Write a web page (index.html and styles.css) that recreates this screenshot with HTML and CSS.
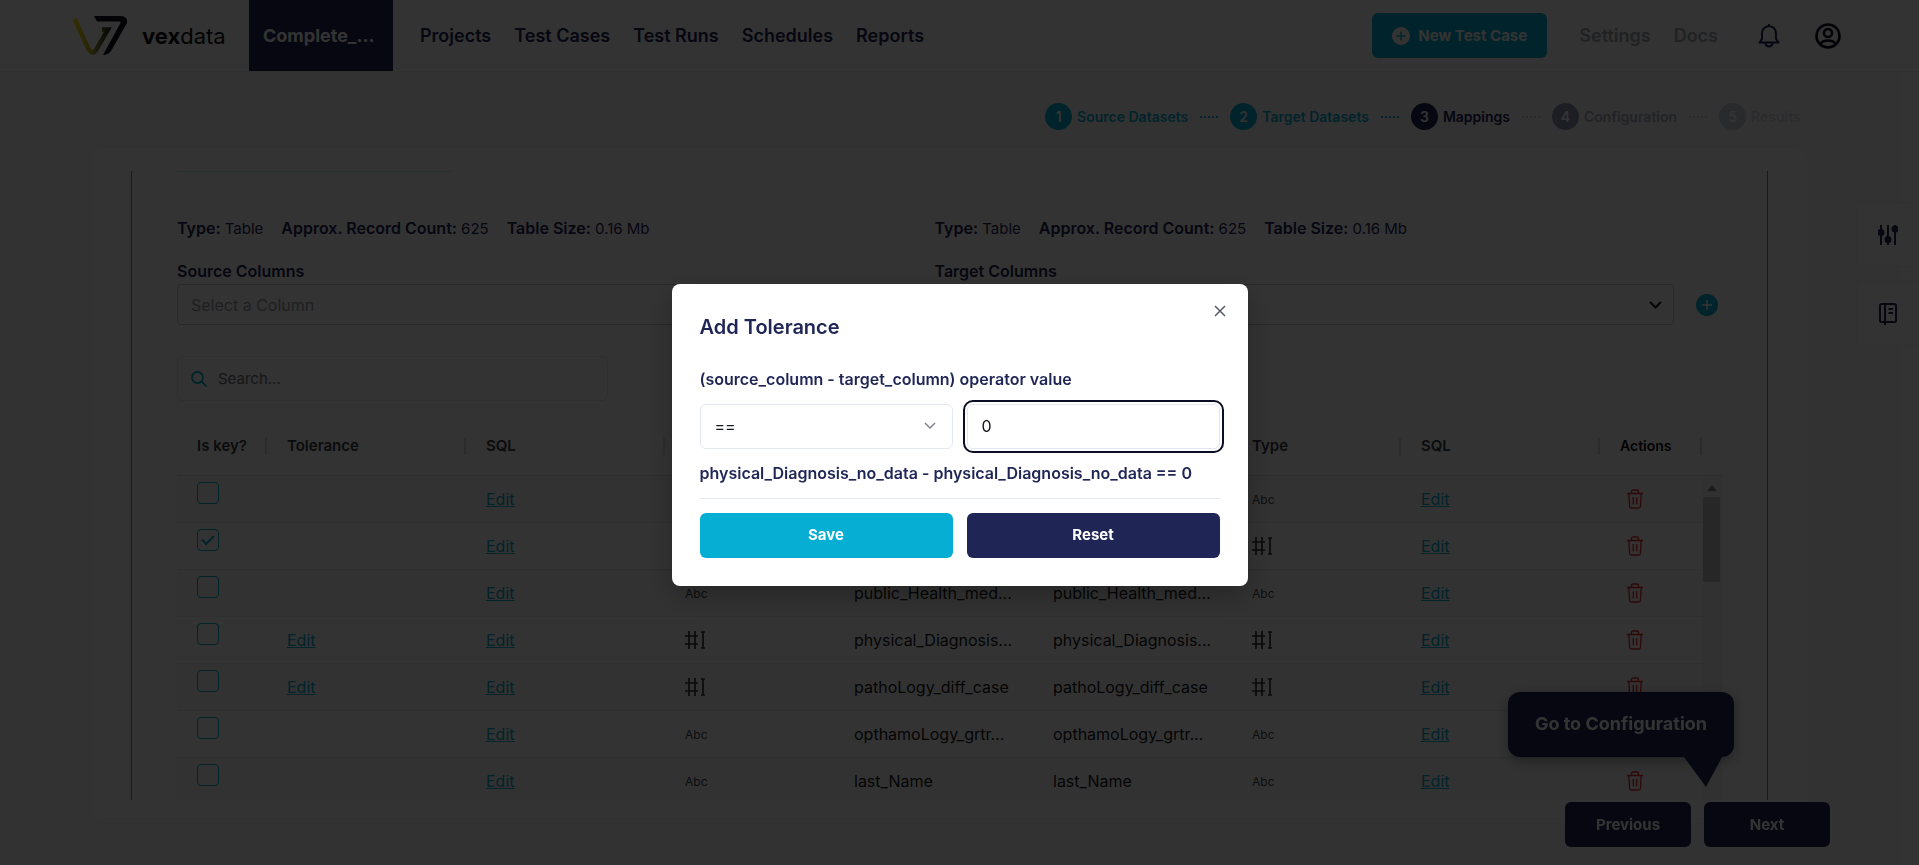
FILE: index.html
```html
<!DOCTYPE html>
<html lang="en">
<head>
<meta charset="utf-8">
<title>vexdata</title>
<link rel="stylesheet" href="styles.css">
</head>
<body>
<svg class="defs" aria-hidden="true">
  <symbol id="trash" viewBox="0 0 16 20"><path d="M0 4.500H16M4.500 4.500V2.500Q4.500 1 6 1H10Q11.500 1 11.500 2.500V4.500M1.800 4.500 2.600 17.500Q2.700 19 4.200 19H11.800Q13.300 19 13.400 17.500L14.200 4.500M6.300 8V15.500M9.700 8V15.500" fill="none" stroke="currentColor" stroke-width="1.300"/></symbol>
  <symbol id="num" viewBox="0 0 20 18"><path d="M4 0V18M10 0V18M0 5H13M0 13H13M16 1H20M16 17H20M18 1V17" fill="none" stroke="currentColor" stroke-width="1.700"/></symbol>
</svg>

<header class="header">
  <a class="brand" href="#">
    <svg class="logo" viewBox="0 0 56 40" aria-hidden="true">
      <defs>
        <linearGradient id="lg" x1="0" y1="0" x2="1" y2="0"><stop offset="0" stop-color="#ffe600"/><stop offset=".45" stop-color="#c9b92c"/><stop offset="1" stop-color="#33332c"/></linearGradient>
      </defs>
      <path d="M2.500 3 17 34Q20.500 39 24 34L36 13.500H30" fill="none" stroke="url(#lg)" stroke-width="4.500"/>
      <path d="M22 0H49Q57 1 54.500 8L39 35Q36 39 31 39L48.500 7Q49 5.500 47 5.500H25Z" fill="#10131c"/>
    </svg>
    <span class="brand-name"><b>vex</b>data</span>
  </a>
  <button class="project">Complete_...</button>
  <nav class="nav">
    <a href="#">Projects</a><a href="#">Test Cases</a><a href="#">Test Runs</a><a href="#">Schedules</a><a href="#">Reports</a>
  </nav>
  <button class="new-case">
    <svg width="18" height="18" viewBox="0 0 18 18" aria-hidden="true"><circle cx="9" cy="9" r="9" fill="#fff"/><path d="M9 4.500V13.500M4.500 9H13.500" stroke="#06aed4" stroke-width="1.500"/></svg>
    New Test Case
  </button>
  <nav class="nav nav-muted"><a href="#">Settings</a><a href="#">Docs</a></nav>
  <button class="icon-btn" aria-label="Notifications">
    <svg width="22" height="24" viewBox="0 0 22 24" fill="none" stroke="#1f2555" stroke-width="2"><path d="M1.500 18.500H20.500L18 15V9.500Q18 3 11 2Q4 3 4 9.500V15ZM7.500 19Q8 22.500 11 22.500T14.500 19" stroke-linejoin="round"/><path d="M11 0V2"/></svg>
  </button>
  <button class="icon-btn user" aria-label="Account">
    <svg width="26" height="26" viewBox="0 0 26 26" fill="none" stroke="#0b0d1f" stroke-width="2.600"><circle cx="13" cy="13" r="11.500"/><circle cx="13" cy="10" r="4"/><path d="M5.500 21Q7.500 17.500 13 17.500T20.500 21"/></svg>
  </button>
</header>

<main class="page">
  <ol class="steps">
    <li class="step done"><span class="dot">1</span>Source Datasets</li>
    <li class="step done"><span class="dot">2</span>Target Datasets</li>
    <li class="step current"><span class="dot">3</span>Mappings</li>
    <li class="step next"><span class="dot">4</span>Configuration</li>
    <li class="step later"><span class="dot">5</span>Results</li>
  </ol>

  <section class="card">
    <div class="panel">
      <div class="tab-line"></div>
      <div class="datasets">
        <div class="dataset">
          <p class="meta"><span><b>Type:</b> Table</span><span><b>Approx. Record Count:</b> 625</span><span><b>Table Size:</b> 0.16 Mb</span></p>
          <label class="field-label" for="src">Source Columns</label>
          <select id="src" class="column-select"><option>Select a Column</option></select>
        </div>
        <div class="dataset">
          <p class="meta"><span><b>Type:</b> Table</span><span><b>Approx. Record Count:</b> 625</span><span><b>Table Size:</b> 0.16 Mb</span></p>
          <label class="field-label" for="tgt">Target Columns</label>
          <select id="tgt" class="column-select"><option>Select a Column</option></select>
        </div>
        <button class="add" aria-label="Add mapping">
          <svg width="22" height="22" viewBox="0 0 22 22"><circle cx="11" cy="11" r="11" fill="#06aed4"/><path d="M11 6V16M6 11H16" stroke="#fff" stroke-width="1.500"/></svg>
        </button>
      </div>

      <label class="search">
        <svg width="16" height="16" viewBox="0 0 16 16" fill="none" stroke="#06aed4" stroke-width="1.800" aria-hidden="true"><circle cx="6.500" cy="6.500" r="5.500"/><path d="M10.500 10.500 15.500 15.500"/></svg>
        <input type="search" placeholder="Search..." aria-label="Search">
      </label>

      <div class="table-wrap">
        <table class="mappings">
          <colgroup><col class="c-key"><col class="c-wide"><col class="c-wide"><col class="c-type"><col class="c-wide"><col class="c-wide"><col class="c-type"><col class="c-wide"><col></colgroup>
          <thead><tr><th>Is key?</th><th>Tolerance</th><th>SQL</th><th>Type</th><th></th><th></th><th>Type</th><th>SQL</th><th class="actions">Actions</th></tr></thead>
          <tbody>
            <tr><td><input type="checkbox" aria-label="Is key"></td><td></td><td><a href="#">Edit</a></td><td><span class="abc">Abc</span></td><td></td><td></td><td><span class="abc">Abc</span></td><td><a href="#">Edit</a></td><td><button class="del" aria-label="Delete"><svg><use href="#trash"/></svg></button></td></tr>
            <tr><td><input type="checkbox" aria-label="Is key" checked></td><td></td><td><a href="#">Edit</a></td><td><svg class="num"><use href="#num"/></svg></td><td></td><td></td><td><svg class="num"><use href="#num"/></svg></td><td><a href="#">Edit</a></td><td><button class="del" aria-label="Delete"><svg><use href="#trash"/></svg></button></td></tr>
            <tr><td><input type="checkbox" aria-label="Is key"></td><td></td><td><a href="#">Edit</a></td><td><span class="abc">Abc</span></td><td>public_Health_med...</td><td>public_Health_med...</td><td><span class="abc">Abc</span></td><td><a href="#">Edit</a></td><td><button class="del" aria-label="Delete"><svg><use href="#trash"/></svg></button></td></tr>
            <tr><td><input type="checkbox" aria-label="Is key"></td><td><a href="#">Edit</a></td><td><a href="#">Edit</a></td><td><svg class="num"><use href="#num"/></svg></td><td>physical_Diagnosis...</td><td>physical_Diagnosis...</td><td><svg class="num"><use href="#num"/></svg></td><td><a href="#">Edit</a></td><td><button class="del" aria-label="Delete"><svg><use href="#trash"/></svg></button></td></tr>
            <tr><td><input type="checkbox" aria-label="Is key"></td><td><a href="#">Edit</a></td><td><a href="#">Edit</a></td><td><svg class="num"><use href="#num"/></svg></td><td>pathoLogy_diff_case</td><td>pathoLogy_diff_case</td><td><svg class="num"><use href="#num"/></svg></td><td><a href="#">Edit</a></td><td><button class="del" aria-label="Delete"><svg><use href="#trash"/></svg></button></td></tr>
            <tr><td><input type="checkbox" aria-label="Is key"></td><td></td><td><a href="#">Edit</a></td><td><span class="abc">Abc</span></td><td>opthamoLogy_grtr...</td><td>opthamoLogy_grtr...</td><td><span class="abc">Abc</span></td><td><a href="#">Edit</a></td><td><button class="del" aria-label="Delete"><svg><use href="#trash"/></svg></button></td></tr>
            <tr><td><input type="checkbox" aria-label="Is key"></td><td></td><td><a href="#">Edit</a></td><td><span class="abc">Abc</span></td><td>last_Name</td><td>last_Name</td><td><span class="abc">Abc</span></td><td><a href="#">Edit</a></td><td><button class="del" aria-label="Delete"><svg><use href="#trash"/></svg></button></td></tr>
          </tbody>
        </table>
        <div class="scrollbar"><svg width="10" height="6" viewBox="0 0 10 6"><path d="M0 6 5 0 10 6Z" fill="#888"/></svg><div class="thumb"></div></div>
      </div>
    </div>
  </section>
</main>

<aside class="side">
  <button aria-label="Filters"><svg width="20" height="22" viewBox="0 0 20 22" stroke="#1f2555" fill="#1f2555" stroke-width="2"><path d="M3 1V21M10 1V21M17 1V21"/><circle cx="3" cy="8.500" r="2.500"/><circle cx="10" cy="15.500" r="2.500"/><circle cx="17" cy="5" r="2.500"/></svg></button>
  <button aria-label="Notes"><svg width="20" height="24" viewBox="0 0 20 24" stroke="#1f2555" fill="none" stroke-width="2"><rect x="2" y="2" width="16" height="18" rx="1.500"/><path d="M7 2V23M10.500 7H15M10.500 11H15"/></svg></button>
</aside>

<div class="pager">
  <div class="hint">Go to Configuration<svg width="38" height="30" viewBox="0 0 38 30"><path d="M0 0H38L22 30Z" fill="#1f2555"/></svg></div>
  <button>Previous</button>
  <button>Next</button>
</div>

<div class="overlay">
  <form class="modal" role="dialog" aria-labelledby="modal-title">
    <button type="button" class="close" aria-label="Close"><svg width="12" height="12" viewBox="0 0 12 12" stroke="#555a6b" stroke-width="1.500"><path d="M1 1 11 11M11 1 1 11"/></svg></button>
    <h2 id="modal-title">Add Tolerance</h2>
    <p>(source_column - target_column) operator value</p>
    <div class="pair">
      <select aria-label="Operator"><option>==</option></select>
      <input class="focused" type="text" value="0" aria-label="Value">
    </div>
    <p>physical_Diagnosis_no_data - physical_Diagnosis_no_data == 0</p>
    <div class="pair buttons">
      <button type="button" class="save">Save</button>
      <button type="button" class="reset">Reset</button>
    </div>
  </form>
</div>
</body>
</html>
```

FILE: styles.css
```css
:root {
  --navy: #1f2555;
  --teal: #06aed4;
  --line: #e3e8f0;
}
* { box-sizing: border-box; }
body {
  margin: 0;
  height: 100vh;
  display: flex;
  flex-direction: column;
  overflow: hidden;
  background: #fff;
  color: #101228;
  font: 16px/20px Inter, "Open Sans", sans-serif;
}
button, input, select { font: inherit; color: inherit; }
button { border: 0; padding: 0; background: none; }
.defs { display: none; }
svg { display: block; }

.header {
  display: flex;
  align-items: center;
  flex: none;
  height: 72px;
  padding: 0 78px 0 72px;
  border-bottom: 1px solid #f0f1f3;
  background: #fff;
}
.brand { display: flex; align-items: center; gap: 14px; width: 177px; color: #111; text-decoration: none; }
.logo { width: 56px; height: 40px; }
.brand-name { font-size: 22px; }
.project { align-self: stretch; width: 144px; padding-left: 14px; background: var(--navy); color: #fff; font-size: 18px; font-weight: 700; text-align: left; }
.nav { display: flex; gap: 23px; margin: 0 auto 0 27px; font-size: 18px; font-weight: 600; }
.nav a { color: var(--navy); text-decoration: none; }
.nav-muted { margin: 0 40px 0 32px; }
.nav-muted a { color: #a5a8b0; }
.new-case { display: flex; align-items: center; justify-content: center; gap: 8px; width: 175px; height: 45px; border-radius: 6px; background: var(--teal); color: #fff; font-size: 15px; font-weight: 700; }
.user { margin-left: 35px; }

.page { flex: 1; min-height: 0; display: flex; flex-direction: column; margin-right: 20px; padding: 31px 90px 41px; background: #fbfbfc; }
.steps { display: flex; justify-content: flex-end; gap: 12px; margin: 0 8px 17px 0; padding: 0; list-style: none; font-size: 14px; font-weight: 600; }
.step { display: flex; align-items: center; gap: 5px; }
.step + .step::before { content: ""; width: 18px; margin-right: 7px; border-top: 2px dotted currentColor; }
.dot { display: flex; align-items: center; justify-content: center; width: 27px; height: 27px; border-radius: 50%; background: var(--navy); color: #fff; }
.done { color: var(--teal); }
.done .dot { background: var(--teal); }
.current { color: var(--navy); }
.next { color: #a9adbd; }
.next .dot { background: #9297b4; }
.later { color: #d5d8e0; }
.later .dot { background: #cdd0dc; }
.step.current::before { color: var(--teal); }
.step.next::before, .step.later::before { color: #d5d8e2; }

.card { flex: 1; min-height: 0; padding: 23px 40px; border: 1px solid #f1f2f4; border-radius: 12px; background: #fff; }
.panel { height: 100%; padding: 0 45px; overflow: hidden; border: solid var(--teal); border-width: 0 1px; }
.tab-line { width: 274px; height: 1px; margin-bottom: 46px; background: #bfe5ee; }
.datasets { display: grid; grid-template-columns: 1fr 1fr 30px; column-gap: 18px; align-items: end; }
.dataset { min-width: 0; }
.meta { display: flex; gap: 18px; margin: 0 0 22px; font-size: 15px; }
.meta b { font-size: 16px; font-weight: 600; }
.meta, .field-label { color: var(--navy); }
.field-label { display: block; margin-bottom: 3px; font-weight: 600; }
.column-select { display: block; width: 100%; height: 41px; padding: 0 13px; border: 1px solid #c9ccd4; border-radius: 4px; background: #fff; color: #9a9ca3; appearance: none; }
.column-select, .pair select { background-repeat: no-repeat; background-position: right 11px center; background-image: url("data:image/svg+xml,%3Csvg xmlns='http://www.w3.org/2000/svg' width='13' height='8'%3E%3Cpath d='M1 1l5.500 5.500L12 1' fill='none' stroke='%23111' stroke-width='2'/%3E%3C/svg%3E"); }
.add { height: 41px; display: grid; place-items: center; }
.search { display: flex; align-items: center; gap: 11px; width: 431px; height: 45px; margin-top: 31px; padding: 0 13px; border: 1px solid var(--line); border-radius: 6px; font-size: 15px; }
.search input { flex: 1; border: 0; padding: 0; outline: 0; background: none; appearance: none; }
.search input::placeholder { color: #6c7075; opacity: 1; }

.table-wrap { display: flex; align-items: flex-start; margin-top: 16px; }
.mappings { flex: 1; width: 0; table-layout: fixed; border-collapse: collapse; }
.c-key { width: 90px; }
.c-wide { width: 199px; }
.c-type { width: 169px; }
.mappings th { position: relative; height: 58px; padding: 0 20px; border-bottom: 1px solid #dcdfe6; color: #3a3d45; font-size: 15px; font-weight: 600; text-align: left; white-space: nowrap; }
.mappings th::after { content: ""; position: absolute; top: 21px; right: 0; width: 2px; height: 17px; background: #dadce2; }
.mappings .actions { color: #111; font-size: 14px; }
.mappings td { height: 47px; padding: 1px 20px 0; border-bottom: 1px solid #e8eaee; color: #16181d; white-space: nowrap; }
.mappings tbody tr:nth-child(odd) { background: #fafafa; }
.mappings a { color: var(--teal); }
.mappings input { display: grid; place-items: center; width: 22px; height: 22px; margin: 0 0 12px; border: 1px solid var(--teal); border-radius: 4px; appearance: none; }
.mappings input:checked::after { content: ""; width: 10px; height: 5px; margin-bottom: 3px; border: solid var(--teal); border-width: 0 0 2px 2px; rotate: -45deg; }
.abc { color: #44474e; font-size: 12px; }
.num { width: 20px; height: 18px; color: #333; }
.del { display: block; margin-left: 7px; color: #e5252a; }
.del svg { width: 16px; height: 20px; }
.scrollbar { width: 20px; margin-top: 58px; padding: 9px 2px 0 1px; min-height: 360px; border-top: 1px solid #dcdfe6; background: #f3f3f3; }
.scrollbar svg { margin: 0 auto 6px; }
.thumb { height: 85px; background: #c4c4c4; }

.side { position: fixed; right: 0; top: 202px; display: grid; gap: 14px; }
.side button { display: grid; place-items: center; width: 63px; height: 65px; border: 1px solid #f3f4f6; border-right: 0; border-radius: 8px 0 0 8px; background: #fff; }

.pager { position: fixed; right: 89px; bottom: 18px; display: flex; gap: 13px; }
.pager button { width: 126px; height: 45px; border-radius: 6px; background: var(--navy); color: #fff; font-size: 15px; font-weight: 700; }
.hint { position: absolute; right: 96px; bottom: 90px; padding: 22px 27px 23px; border-radius: 12px; background: var(--navy); box-shadow: 0 4px 14px rgb(0 0 0 / 35%); color: #fff; font-size: 18px; font-weight: 700; white-space: nowrap; }
.hint svg { position: absolute; right: 12px; top: 100%; }

.overlay { position: fixed; inset: 0; display: grid; place-items: center; padding-top: 4px; background: rgb(0 0 0 / 80%); }
.modal { position: relative; width: 576px; padding: 28px; border-radius: 8px; background: #fff; box-shadow: 0 10px 30px rgb(0 0 0 / 25%); color: var(--navy); }
.close { position: absolute; top: 21px; right: 22px; }
.modal h2 { margin: 0 0 27px; font-size: 20px; line-height: 30px; font-weight: 600; }
.modal p { margin: 0 0 15px; font-weight: 600; white-space: nowrap; }
.pair { display: grid; grid-template-columns: 1fr 1fr; gap: 14px; }
.pair + p { margin: 14px 0 15px; }
.pair select, .pair input, .pair button { width: 100%; height: 45px; border-radius: 6px; }
.pair select, .pair input { padding: 0 14px; border: 1px solid var(--line); background-color: #fff; color: #16181d; appearance: none; }
.pair select { background-position: right 16px center; background-image: url("data:image/svg+xml,%3Csvg xmlns='http://www.w3.org/2000/svg' width='12' height='8'%3E%3Cpath d='M1 1l5 5 5-5' fill='none' stroke='%23808490' stroke-width='1.500'/%3E%3C/svg%3E"); }
.pair .focused { outline: 2px solid #0a0d24; outline-offset: 2px; }
.buttons { padding-top: 14px; border-top: 1px solid var(--line); }
.pair button { color: #fff; font-size: 15px; font-weight: 700; }
.save { background: var(--teal); }
.reset { background: var(--navy); }
```
